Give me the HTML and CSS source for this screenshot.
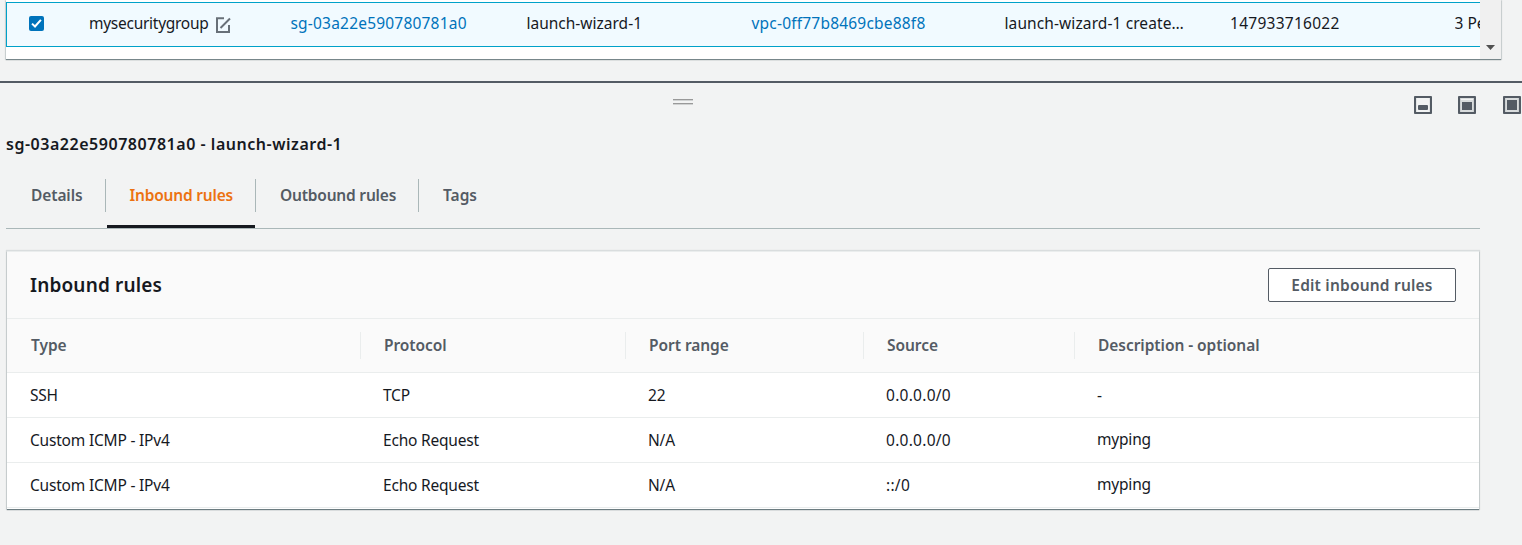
FILE: index.html
```html
<!DOCTYPE html>
<html lang="en">
<head>
<meta charset="utf-8">
<title>Security groups</title>
<link rel="stylesheet" href="styles.css">
</head>
<body>
<section class="groups">
  <div class="groups-view">
    <div class="group-row">
      <span class="check"><svg width="15" height="15" viewBox="0 0 15 15"><rect width="15" height="15" rx="2" fill="#0073bb"/><path d="M3 7.6l3 2.9 5.9-6.7" fill="none" stroke="#fff" stroke-width="2"/></svg></span>
      <span class="g-name"><span class="t-name">mysecuritygroup</span><svg class="edit" width="15" height="16" viewBox="0 0 15 16" fill="none" stroke="#687078" stroke-width="2"><path d="M8 1.2H1V15h12V8M4.5 11L14 1.5"/></svg></span>
      <span class="g-id link">sg-03a22e590780781a0</span>
      <span class="g-group">launch-wizard-1</span>
      <span class="g-vpc link">vpc-0ff77b8469cbe88f8</span>
      <span class="g-desc">launch-wizard-1 create…</span>
      <span class="g-owner">147933716022</span>
      <span class="g-count">3 Pe</span>
    </div>
  </div>
  <div class="scrollbar"><svg width="9" height="5" viewBox="0 0 9 5"><path d="M0 0h9L4.5 5z" fill="#505050"/></svg></div>
</section>
<section class="split">
  <div class="toolbar">
    <svg class="handle" width="20" height="6" viewBox="0 0 20 6"><path d="M0 .5h20M0 4.5h20" stroke="#999"/><path d="M0 1.5h20M0 5.5h20" stroke="#d0d2d2"/></svg>
    <div class="sizes">
      <svg width="18" height="18" viewBox="0 0 18 18"><rect x="1" y="1" width="16" height="16" rx=".5" fill="none" stroke="#545b64" stroke-width="2.2"/><rect x="4" y="9" width="10" height="5" rx="1" fill="#545b64"/></svg>
      <svg width="18" height="18" viewBox="0 0 18 18"><rect x="1" y="1" width="16" height="16" rx=".5" fill="#d9dcdd" stroke="#545b64" stroke-width="2.2"/><path d="M3 3h12v1H3z" fill="#f2f3f3"/><rect x="4" y="6" width="10" height="8" fill="#545b64"/></svg>
      <svg width="18" height="18" viewBox="0 0 18 18"><rect x="1" y="1" width="16" height="16" rx=".5" fill="#d9dcdd" stroke="#545b64" stroke-width="2.2"/><rect x="4" y="4" width="10" height="10" fill="#545b64"/></svg>
    </div>
  </div>
  <h1 class="title">sg-03a22e590780781a0 - launch-wizard-1</h1>
  <nav class="tabs">
    <a class="tab t-details"><span>Details</span></a>
    <a class="tab t-inbound active"><span>Inbound rules</span></a>
    <a class="tab t-outbound"><span>Outbound rules</span></a>
    <a class="tab t-tags"><span>Tags</span></a>
  </nav>
  <div class="card">
    <header class="card-head"><h2>Inbound rules</h2><button class="btn">Edit inbound rules</button></header>
    <div class="row head"><span>Type</span><span>Protocol</span><span>Port range</span><span>Source</span><span class="h-desc">Description - optional</span></div>
    <div class="row"><span>SSH</span><span>TCP</span><span>22</span><span class="num">0.0.0.0/0</span><span>-</span></div>
    <div class="row"><span>Custom ICMP - IPv4</span><span>Echo Request</span><span>N/A</span><span class="num">0.0.0.0/0</span><span class="desc">myping</span></div>
    <div class="row"><span>Custom ICMP - IPv4</span><span>Echo Request</span><span>N/A</span><span class="num">::/0</span><span class="desc">myping</span></div>
  </div>
</section>
</body>
</html>
```
FILE: styles.css
```css
* { box-sizing: border-box; }
body { margin: 0; height: 545px; overflow: hidden; background: #f2f3f3; color: #16191f; font: 15.5px/22px "Noto Sans", "Open Sans", sans-serif; }
svg { display: block; flex: none; }
.groups { display: flex; width: 1495px; height: 59px; margin-left: 6px; background: #fff; box-shadow: 0 1px 1px rgba(0,28,36,.45), 0 0 1px 1px rgba(0,28,36,.1); }
.groups-view { width: 1474px; padding-top: 2px; overflow: hidden; }
.group-row { display: grid; grid-template-columns: 82px 201.5px 236px 225px 253px 225.5px 224.5px 26px; align-items: center; height: 45px; width: 1474px; background: #f1faff; border: 1px solid #00a1c9; border-right: 0; padding-bottom: 3px; white-space: nowrap; }
.check { padding: 1px 0 0 22px; }
.g-name { display: flex; align-items: center; gap: 7px; }
.link { color: #0073bb; letter-spacing: .2px; }
.t-name { letter-spacing: -.27px; }
.edit { margin-top: 4px; }
.g-desc { letter-spacing: .1px; }
.g-owner { letter-spacing: .27px; }
.g-count { overflow: hidden; }
.scrollbar { flex: 1; background: #f0f0f0; padding: 45px 0 0 6px; }
.split { margin-top: 22px; border-top: 2px solid #545b64; }
.toolbar { display: flex; justify-content: space-between; height: 45px; padding: 13px 1px 0 673px; }
.handle { margin-top: 3px; }
.sizes { display: flex; gap: 26px; }
.sizes svg:last-child { margin-left: 1px; }
.title { margin: 5px 0 0 6px; font-size: 16px; line-height: 22px; font-weight: 600; letter-spacing: .53px; }
.tabs { display: flex; width: 1474px; height: 55px; margin: 19px 0 0 6px; border-bottom: 1px solid #aab7b8; }
.tab { height: 54px; padding-top: 5px; font-weight: 600; color: #545b64; white-space: nowrap; letter-spacing: -.2px; }
.tab span { display: block; height: 33px; line-height: 32px; padding-left: 24px; border-right: 1px solid #aab7b8; }
.t-details { width: 100px; letter-spacing: -.1px; }
.t-details span { padding-left: 25px; }
.t-inbound { width: 150px; padding-left: 1px; }
.t-inbound span { padding-left: 22.5px; }
.t-outbound { width: 163px; }
.t-tags { letter-spacing: 0; }
.t-tags span { border: 0; }
.active { color: #ec7211; background: linear-gradient(#16191f, #16191f) 1px 100% / 148px 3px no-repeat; }
.card { width: 1472px; margin: 22px 0 0 7px; background: #fff; box-shadow: 0 1px 1px rgba(0,28,36,.5), 0 0 1px 1px rgba(0,28,36,.1); border-top: 1px solid #eaeded; padding-bottom: 1px; }
.card-head { display: flex; justify-content: space-between; align-items: center; height: 66px; padding: 0 23px; background: #fafafa; }
h2 { margin: 0; font-size: 19px; font-weight: 600; letter-spacing: .15px; }
.btn { width: 188px; height: 34px; padding: 0; border: 1px solid #545b64; border-radius: 2px; background: #fff; color: #545b64; font: 600 15.5px/30px "Noto Sans", sans-serif; letter-spacing: .2px; }
.row { display: grid; grid-template-columns: 353px 265px 238px 211px 1fr; align-items: center; height: 45px; padding-left: 23px; border-bottom: 1px solid #eaeded; white-space: nowrap; letter-spacing: -.2px; }
.head { height: 55px; padding-left: 24px; background: #fafafa; border-top: 1px solid #eaeded; color: #545b64; font-weight: 600; letter-spacing: -.05px; }
.head span { height: 27px; line-height: 27px; background: linear-gradient(#eaeded, #eaeded) calc(100% - 23px) 0 / 1px 100% no-repeat; }
.head .h-desc { background: none; }
.num { letter-spacing: .27px; }
.desc { padding-bottom: 2px; }
```
